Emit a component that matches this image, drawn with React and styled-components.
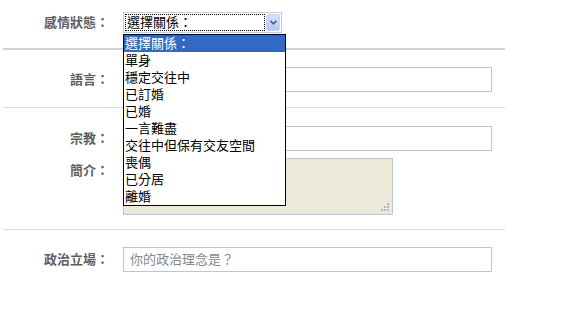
import React from "react";
import styled, { createGlobalStyle } from "styled-components";

const GlobalStyle = createGlobalStyle`
    body {
        margin: 0;
        background: #fff;
        font-family: "Liberation Sans", "Noto Sans CJK TC", "Noto Sans CJK SC", sans-serif;
    }
`;

const Form = styled.div`
    width: 502px;
    margin-left: 3px;
`;

const Section = styled.div`
    display: flex;
    flex-direction: column;
    gap: 7px;
    padding: ${(p) => p.$pt}px 0 ${(p) => p.$pb}px;
    border-bottom: ${(p) => p.$rule || "none"};
`;

const Row = styled.div`
    display: flex;
    align-items: ${(p) => (p.$top ? "flex-start" : "center")};
`;

const Label = styled.div`
    width: 106px;
    margin-right: 14px;
    padding-top: ${(p) => (p.$top ? "4px" : "0")};
    text-align: right;
    font-size: 13px;
    line-height: 17px;
    font-weight: bold;
    color: #5e5e5e;
    white-space: nowrap;
`;

const TextInput = styled.input`
    width: 369px;
    height: 25px;
    box-sizing: border-box;
    border: 1px solid #bcc6d1;
    padding: 0 6px;
    font-family: inherit;
    font-size: 13px;
    color: #333;
    outline: none;
    &::placeholder {
        color: #888;
    }
`;

const AreaWrap = styled.div`
    position: relative;
    width: 270px;
    height: 57px;
`;

const Area = styled.textarea`
    display: block;
    width: 100%;
    height: 100%;
    box-sizing: border-box;
    border: 1px solid #bcc6d1;
    background: #ece9d8;
    resize: none;
    outline: none;
    font-family: inherit;
    font-size: 13px;
`;

const Grip = styled.svg`
    position: absolute;
    right: 3px;
    bottom: 3px;
`;

const SelectWrap = styled.div`
    position: relative;
    width: 159px;
    height: 21px;
    box-sizing: border-box;
    border: 1px solid #c4ccd6;
    background: #fff;
    display: flex;
    align-items: center;
    padding: 1px;
    gap: 1px;
`;

const SelectValue = styled.div`
    flex: 1;
    height: 17px;
    box-sizing: border-box;
    border: 1px dotted #000;
    padding-left: 1px;
    font-size: 13px;
    line-height: 15px;
    color: #000;
    white-space: nowrap;
`;

const ArrowButton = styled.div`
    width: 14px;
    height: 17px;
    box-sizing: border-box;
    border: 1px solid #c3d3fd;
    border-radius: 2px;
    background: linear-gradient(#d6e2fd, #b4c8f6);
    display: flex;
    align-items: center;
    justify-content: center;
`;

const DropList = styled.ul`
    position: absolute;
    left: -1px;
    top: 21px;
    width: 163px;
    margin: 0;
    padding: 0;
    list-style: none;
    box-sizing: border-box;
    border: 1px solid #000;
    background: #fff;
    z-index: 10;
`;

const Option = styled.li`
    height: 17px;
    padding-left: 1px;
    font-size: 13px;
    line-height: 17px;
    white-space: nowrap;
    color: ${(p) => (p.$active ? "#fff" : "#000")};
    background: ${(p) => (p.$active ? "#316ac5" : "transparent")};
`;

const options = [
    "選擇關係：",
    "單身",
    "穩定交往中",
    "已訂婚",
    "已婚",
    "一言難盡",
    "交往中但保有交友空間",
    "喪偶",
    "已分居",
    "離婚",
];

function RelationSelect() {
    return (
        <SelectWrap>
            <SelectValue>{options[0]}</SelectValue>
            <ArrowButton>
                <svg width="7" height="5" viewBox="0 0 7 5">
                    <path d="M0.5 0.8 L3.5 3.8 L6.5 0.8" fill="none" stroke="#4d6185" strokeWidth="1.6" />
                </svg>
            </ArrowButton>
            <DropList>
                {options.map((o, i) => (
                    <Option key={o} $active={i === 0}>{o}</Option>
                ))}
            </DropList>
        </SelectWrap>
    );
}

export default function App() {
    return (
        <>
            <GlobalStyle />
            <Form>
                <Section $pt={12} $pb={15} $rule="2px solid #d2d2d2">
                    <Row>
                        <Label>感情狀態：</Label>
                        <RelationSelect />
                    </Row>
                </Section>
                <Section $pt={17} $pb={15} $rule="1px solid #dcdcdc">
                    <Row>
                        <Label>語言：</Label>
                        <TextInput />
                    </Row>
                </Section>
                <Section $pt={18} $pb={14} $rule="1px solid #dcdcdc">
                    <Row>
                        <Label>宗教：</Label>
                        <TextInput />
                    </Row>
                    <Row $top>
                        <Label $top>簡介：</Label>
                        <AreaWrap>
                            <Area />
                            <Grip width="9" height="9" viewBox="0 0 9 9">
                                <g fill="#b8b8b0">
                                    <rect x="6" y="0" width="2" height="2" />
                                    <rect x="3" y="3" width="2" height="2" />
                                    <rect x="6" y="3" width="2" height="2" />
                                    <rect x="0" y="6" width="2" height="2" />
                                    <rect x="3" y="6" width="2" height="2" />
                                    <rect x="6" y="6" width="2" height="2" />
                                </g>
                            </Grip>
                        </AreaWrap>
                    </Row>
                </Section>
                <Section $pt={17} $pb={15}>
                    <Row>
                        <Label>政治立場：</Label>
                        <TextInput placeholder="你的政治理念是？" />
                    </Row>
                </Section>
            </Form>
        </>
    );
}
